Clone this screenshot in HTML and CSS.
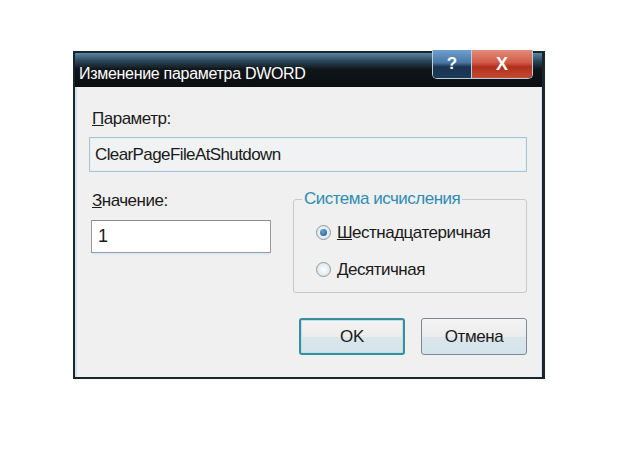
FILE: index.html
```html
<!DOCTYPE html>
<html>
<head>
<meta charset="utf-8">
<title>Изменение параметра DWORD</title>
<link rel="stylesheet" href="styles.css">
</head>
<body>
<div class="page">
	<div class="dialog">
		<div class="titlebar">
			<span class="title">Изменение параметра DWORD</span>
			<div class="caption-btns">
				<span class="cap-btn cap-help">?</span>
				<span class="cap-btn cap-close">X</span>
			</div>
		</div>

		<div class="body">
			<div class="label"><u>П</u>араметр:</div>
			<div class="field field-readonly">ClearPageFileAtShutdown</div>

			<div class="row">
				<div class="col-value">
					<div class="label"><u>З</u>начение:</div>
					<div class="field field-input">1</div>
				</div>
				<fieldset class="group">
					<legend>Система исчисления</legend>
					<label class="radio"><span class="dot checked"></span><span><u>Ш</u>естнадцатеричная</span></label>
					<label class="radio"><span class="dot"></span><span><u>Д</u>есятичная</span></label>
				</fieldset>
			</div>

			<div class="buttons">
				<button class="btn btn-default">OK</button>
				<button class="btn">Отмена</button>
			</div>
		</div>
	</div>
</div>
</body>
</html>
```

FILE: styles.css
```css
html, body {
	margin: 0;
	background: #fff;
}
.page {
	padding: 51px 0 0 73px;
	font-family: "Liberation Sans", Arial, sans-serif;
	color: #1a1a1a;
}
.dialog {
	width: 467px;
	height: 324px;
	border: 2px solid #18252c;
	border-right-width: 3px;
	box-shadow: inset 2px 0 0 #cfe4ee, inset -1px 0 0 #cfe4ee;
	background: #f0f0f0;
	display: flex;
	flex-direction: column;
}
.titlebar {
	height: 34px;
	background: linear-gradient(#5b87a5 0, #2e4a5c 22%, #0f1519 48%, #0b0e11 100%);
	display: flex;
	justify-content: space-between;
	align-items: flex-start;
}
.title {
	color: #fff;
	font-size: 16px;
	padding: 12px 0 0 4px;
	letter-spacing: -0.3px;
}
.caption-btns {
	display: flex;
	margin: -3px 9px 0 0;
	border: 1px solid #b9cfdc;
	border-top: none;
	border-radius: 0 0 5px 5px;
	overflow: hidden;
}
.cap-btn {
	height: 28px;
	display: flex;
	align-items: center;
	justify-content: center;
	color: #fff;
	font-weight: bold;
	font-size: 17px;
}
.cap-help {
	width: 38px;
	background: linear-gradient(#6f9fcb, #4877a4 45%, #1b3450 60%, #1c3a5a);
	border-right: 1px solid #b9cfdc;
}
.cap-close {
	width: 60px;
	background: linear-gradient(#e38d7c, #d05a45 45%, #b0301e 60%, #c44a30);
	font-size: 18px;
}
.body {
	flex: 1;
	padding: 22px 15px 0 14px;
	display: flex;
	flex-direction: column;
}
.label {
	font-size: 17px;
	padding-left: 3px;
	letter-spacing: -0.5px;
}
.field {
	box-sizing: border-box;
	display: flex;
	align-items: center;
	font-size: 17px;
	letter-spacing: -0.6px;
}
.field-readonly {
	margin-top: 8px;
	border: 1px solid #a9c3d3;
	box-shadow: inset 0 0 0 1px #e3eef5;
	background: #f0f2f3;
	padding-left: 5px;
	height: 35px;
}
.row {
	display: flex;
	margin-top: 17px;
	gap: 22px;
}
.col-value {
	width: 182px;
	padding-top: 2px;
}
.field-input {
	height: 33px;
	margin-top: 9px;
	margin-left: 2px;
	border: 1px solid #9a9a9a;
	border-top-color: #8a8a8a;
	background: #fff;
	padding-left: 6px;
	font-size: 18px;
	box-shadow: 0 3px 0 -1px #dbeaf4;
}
.group {
	flex: 1;
	box-sizing: border-box;
	margin: 0;
	padding: 5px 0 0 8px;
	height: 104px;
	border: 1px solid #c8c8c8;
	border-radius: 3px;
}
.group legend {
	color: #2e8db3;
	font-size: 17px;
	padding: 0 2px;
	letter-spacing: -0.5px;
}
.radio {
	display: flex;
	align-items: center;
	gap: 6px;
	padding-left: 14px;
	font-size: 17px;
	height: 37px;
	letter-spacing: -0.5px;
}
.dot {
	width: 13px;
	height: 13px;
	border-radius: 50%;
	border: 1px solid #8a9aa4;
	background: radial-gradient(#ffffff, #d6dde2);
	display: flex;
	align-items: center;
	justify-content: center;
}
.dot.checked::after {
	content: "";
	width: 7px;
	height: 7px;
	border-radius: 50%;
	background: radial-gradient(circle at 40% 35%, #6aa6d8, #1d4f86);
}
.buttons {
	display: flex;
	justify-content: flex-end;
	gap: 16px;
	margin-top: 25px;
}
.btn {
	width: 106px;
	height: 37px;
	font-family: "Liberation Sans", Arial, sans-serif;
	font-size: 17px;
	letter-spacing: -0.4px;
	color: #1a1a1a;
	border: 1px solid #7d8a90;
	border-radius: 3px;
	background: linear-gradient(#f4f4f4, #ececec 50%, #dbe6ec 52%, #d4e3eb);
	padding: 0;
}
.btn-default {
	border: 2px solid #3b8d9a;
	box-shadow: inset 0 0 0 1px #b6e3ee;
}
```
